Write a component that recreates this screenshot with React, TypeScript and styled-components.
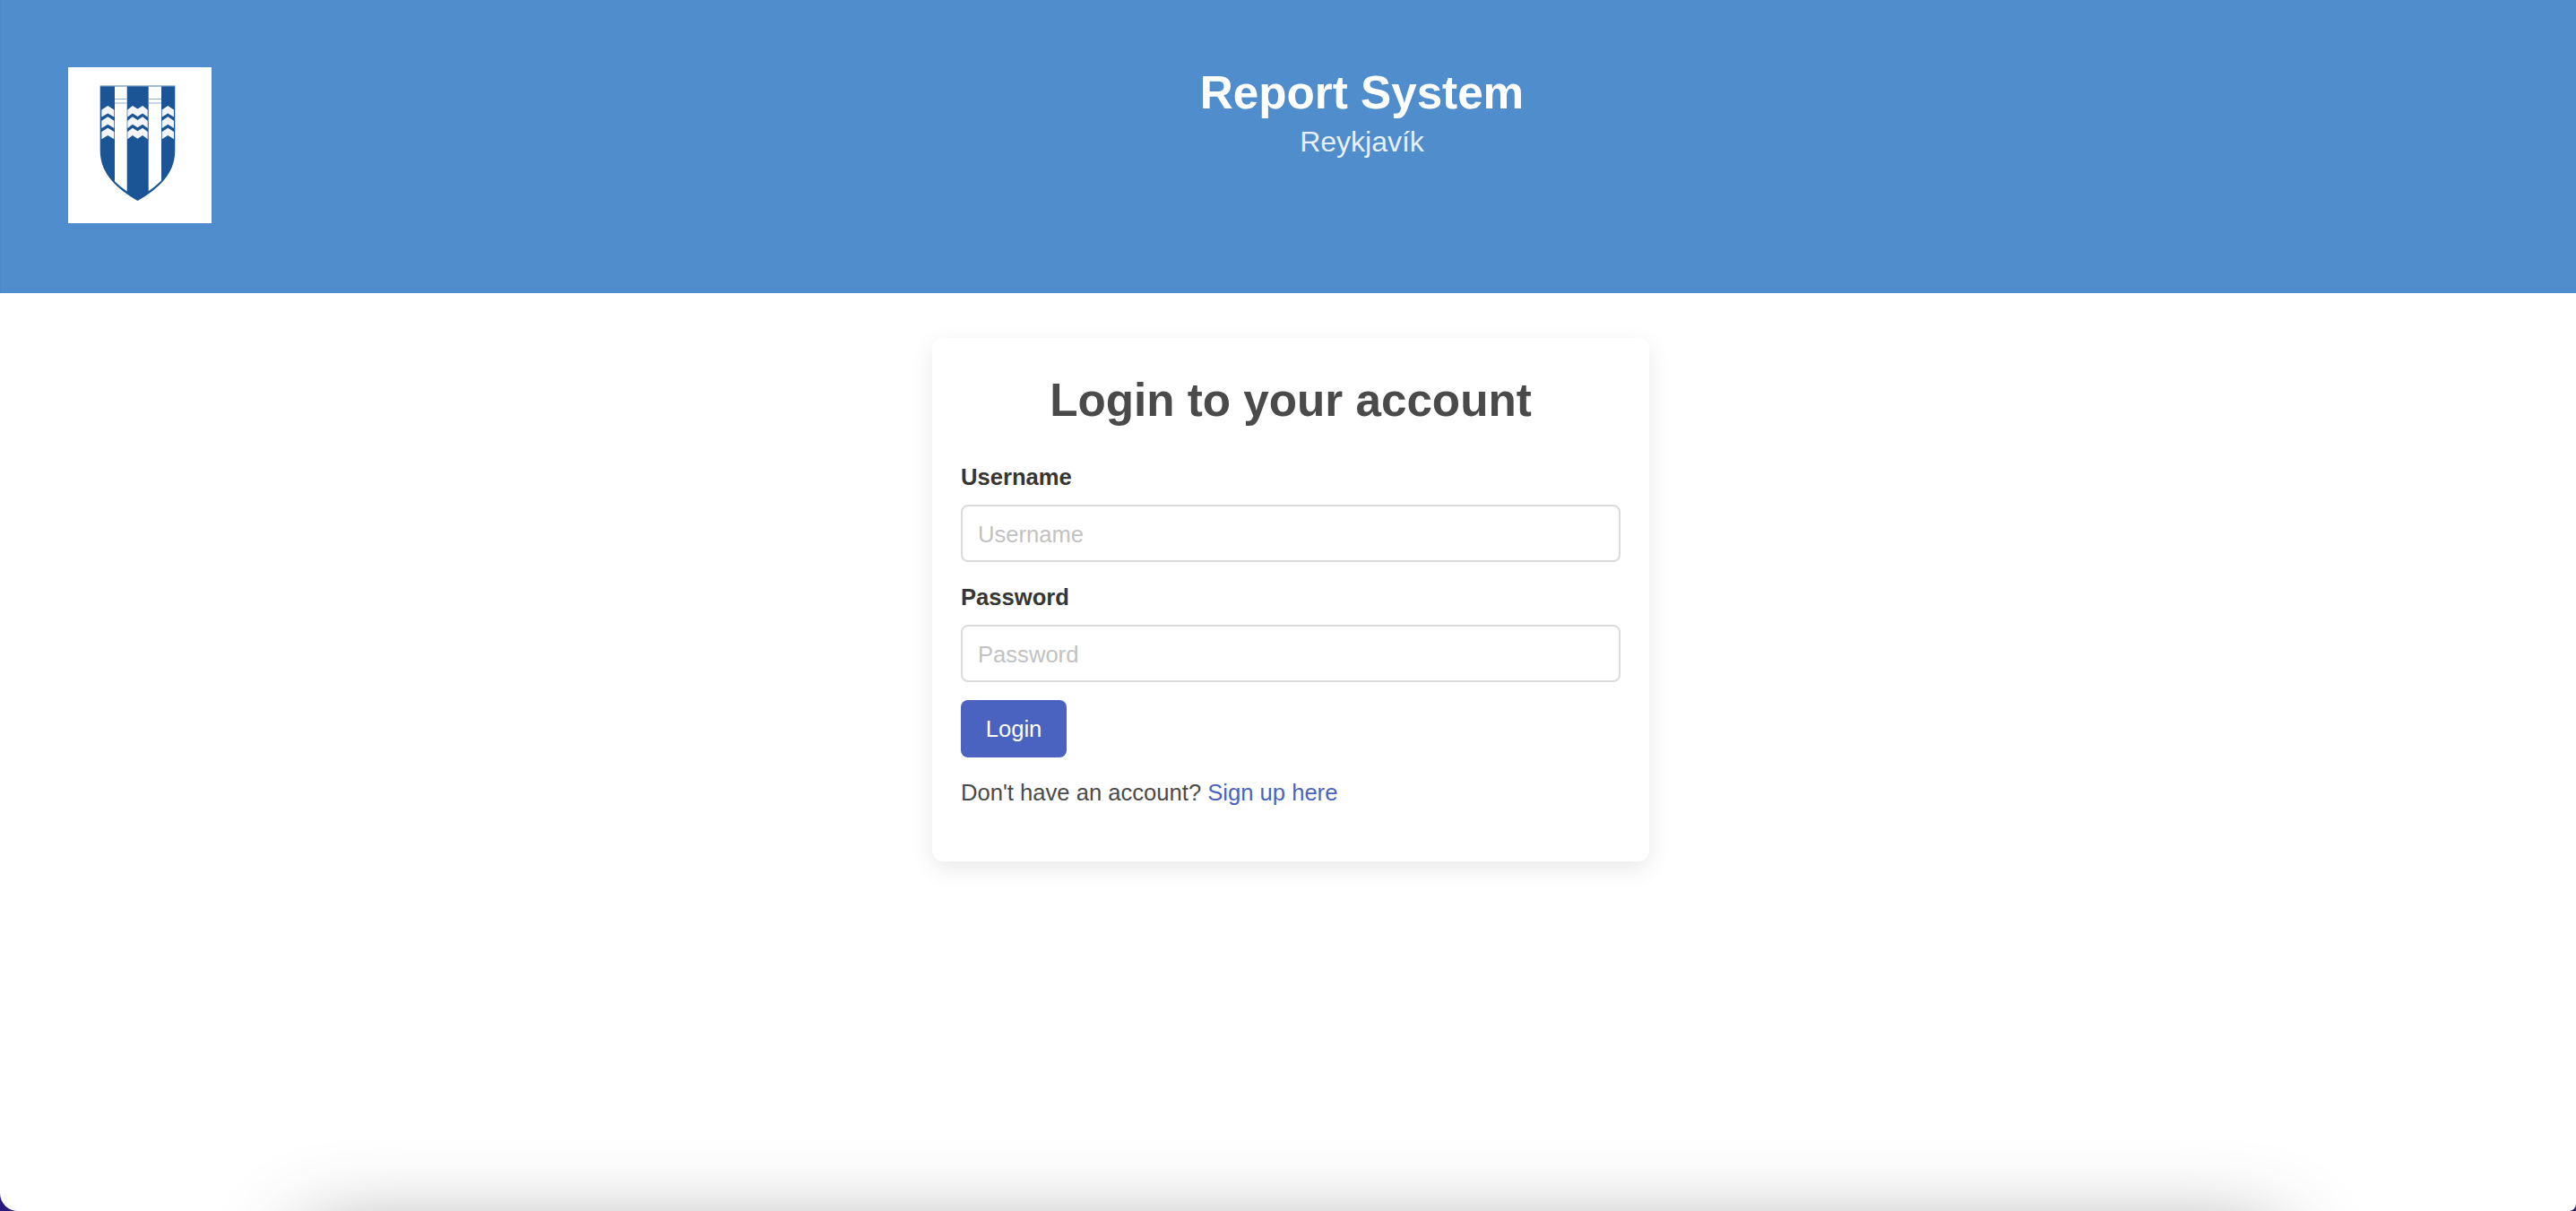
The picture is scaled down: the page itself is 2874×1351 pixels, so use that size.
import React from "react";
import styled, { createGlobalStyle } from "styled-components";

const Global = createGlobalStyle`
  html, body {
    margin: 0;
    padding: 0;
    background: #2a1a7c;
  }
  body {
    font-family: "Liberation Sans", Arial, Helvetica, sans-serif;
    color: #4a4a4a;
  }
  * { box-sizing: border-box; }
`;

const Page = styled.div`
  position: relative;
  height: 1351px;
  overflow: hidden;
  display: flex;
  flex-direction: column;
  background: #ffffff;
  border-bottom-left-radius: 20px;
  border-bottom-right-radius: 8px;
`;

const Header = styled.header`
  flex: none;
  height: 327px;
  display: flex;
  align-items: flex-start;
  padding: 75px 71px 0 76px;
  background: #508dcc;
  border-left: 1px solid #4c88c5;
`;

const LogoBox = styled.div`
  flex: none;
  margin-left: -1px;
  width: 160px;
  height: 174px;
  background: #ffffff;
  svg { display: block; }
`;

const TitleBlock = styled.div`
  flex: 1;
  text-align: center;
  color: #ffffff;
`;

const SiteTitle = styled.h1`
  margin: 0;
  font-size: 51.2px;
  line-height: 58px;
  font-weight: 700;
`;

const SiteSub = styled.p`
  margin: 6px 0 0;
  font-size: 32px;
  line-height: 38px;
  font-weight: 400;
  color: #e8f0f9;
`;

const Main = styled.main`
  flex: 1;
  display: flex;
  justify-content: center;
  align-items: flex-start;
  padding: 50px 0 0 6px;
`;

const Card = styled.section`
  width: 800px;
  padding: 40px 32px 61px;
  background: #ffffff;
  border-radius: 12px;
  box-shadow: 0 8px 26px rgba(0, 0, 0, 0.09);
`;

const CardTitle = styled.h2`
  margin: 0 0 39px;
  font-size: 51.2px;
  line-height: 60px;
  font-weight: 700;
  text-align: center;
  color: #4a4a4a;
`;

const Field = styled.div`
  margin-bottom: 23px;
`;

const Label = styled.label`
  display: block;
  margin-bottom: 15px;
  font-size: 25.6px;
  line-height: 32px;
  font-weight: 700;
  color: #363636;
`;

const Input = styled.input`
  display: block;
  width: 100%;
  height: 64px;
  padding: 2px 17px 0;
  border: 2px solid #dbdbdb;
  border-radius: 8px;
  background: #ffffff;
  font-family: inherit;
  font-size: 25.6px;
  color: #363636;
  outline: none;
  &::placeholder {
    color: #c2c2c2;
    opacity: 1;
  }
`;

const LoginButton = styled.button`
  display: block;
  width: 118px;
  height: 64px;
  margin-top: -3px;
  padding: 0;
  border: none;
  border-radius: 8px;
  background: #4a63c1;
  color: #ffffff;
  font-family: inherit;
  font-size: 25.6px;
`;

const Hint = styled.p`
  margin: 23px 0 0;
  font-size: 25.6px;
  line-height: 32px;
  color: #4a4a4a;
`;

const HintLink = styled.a`
  color: #4a63c1;
  text-decoration: none;
`;

const BottomGlow = styled.div`
  position: absolute;
  left: 340px;
  top: 1381px;
  width: 2200px;
  height: 200px;
  border-radius: 20px;
  box-shadow: 0 0 100px rgba(0, 0, 0, 0.43);
  background: #cfcfcf;
`;

const chevron = (x1: number, x2: number, y: number) =>
  `M${x1} ${y + 4.4}L${(x1 + x2) / 2} ${y}L${x2} ${y + 4.4}V${y + 12.6}L${(x1 + x2) / 2} ${y + 8.4}L${x1} ${y + 12.6}Z`;

const wave = (x1: number, x2: number, y: number) => {
  const w = (x2 - x1) / 4;
  return `M${x1} ${y + 4.4}L${x1 + w} ${y}L${x1 + 2 * w} ${y + 3.6}L${x1 + 3 * w} ${y}L${x2} ${y + 4.4}V${y + 12.6}L${x1 + 3 * w} ${y + 8.4}L${x1 + 2 * w} ${y + 12}L${x1 + w} ${y + 8.4}L${x1} ${y + 12.6}Z`;
};

const shield = "M111.7 95.7H195.3V168C195.3 194 176 211 153.5 224C131 211 111.7 194 111.7 168Z";
const inner = "M111.7 95.7H195.3V168C195 192 175 208.500 153.500 221C132 208.500 112 192 111.7 168Z";

const Crest = () => (
  <svg width="160" height="174" viewBox="76 75 160 174" aria-label="Reykjavík coat of arms">
    <defs>
      <clipPath id="crest-inner">
        <path d={inner} />
      </clipPath>
      <filter id="crest-soft" x="-5%" y="-5%" width="110%" height="110%">
        <feGaussianBlur stdDeviation="0.4" />
      </filter>
    </defs>
    <g filter="url(#crest-soft)">
      <path d={shield} fill="#1c5596" />
      <path d="M111.7 96H195.300" stroke="#7ea3cd" strokeWidth="1" />
      <g clipPath="url(#crest-inner)" fill="#ffffff">
        <rect x="128" y="96.500" width="13.700" height="130" />
        <rect x="165.700" y="96.500" width="14.300" height="130" />
      </g>
      <g stroke="#8fb0d4" strokeWidth="1.100">
        <path d="M128 110.500H141.700M165.700 110.500H180M128 115H141.700M165.700 115H180" />
      </g>
      <g fill="#f4f6fb">
        {[118, 130.300, 142.700].map((y) => (
          <React.Fragment key={y}>
            <path d={chevron(113.300, 127.300, y)} />
            <path d={wave(142.300, 164.700, y)} />
            <path d={chevron(180.700, 194, y)} />
          </React.Fragment>
        ))}
      </g>
    </g>
  </svg>
);

export default function App() {
  return (
    <>
      <Global />
      <Page>
        <Header>
          <LogoBox>
            <Crest />
          </LogoBox>
          <TitleBlock>
            <SiteTitle>Report System</SiteTitle>
            <SiteSub>Reykjavík</SiteSub>
          </TitleBlock>
        </Header>
        <Main>
          <Card>
            <CardTitle>Login to your account</CardTitle>
            <Field>
              <Label htmlFor="username">Username</Label>
              <Input id="username" type="text" placeholder="Username" />
            </Field>
            <Field>
              <Label htmlFor="password">Password</Label>
              <Input id="password" type="password" placeholder="Password" />
            </Field>
            <LoginButton type="button">Login</LoginButton>
            <Hint>
              Don't have an account? <HintLink href="#signup">Sign up here</HintLink>
            </Hint>
          </Card>
        </Main>
        <BottomGlow />
      </Page>
    </>
  );
}
